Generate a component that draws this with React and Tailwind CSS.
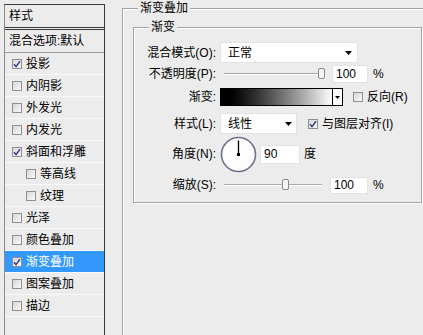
import React from 'react';

// checkbox, classic windows look
const Check = ({ checked }) => (
  <span className="flex w-[10px] h-[10px] shrink-0 items-center justify-center border border-[#8f8f8f] bg-linear-to-br from-[#d6d6d6] to-[#fbfbfb]">
    {checked && (
      <svg width="8" height="8" viewBox="0 0 8 8">
        <path d="M1 4.2 L3 6.6 L7 1.2" fill="none" stroke="#383d8c" strokeWidth="1.5" />
      </svg>
    )}
  </span>
);

const Slider = ({ thumb }) => (
  <div className="relative w-[98px] h-[12px]">
    <div className="absolute left-0 right-0 top-[5px] h-[2px] border-t border-t-[#a9a9a9] border-b border-b-white" />
    <div className={`absolute top-0 w-[7px] h-[11px] rounded-[2px] border border-[#8a8a8a] bg-[#f4f4f4] ${thumb}`} />
  </div>
);

const Arrow = () => (
  <svg width="7" height="4" viewBox="0 0 7 4">
    <path d="M0 0 H7 L3.5 4 Z" fill="#000" />
  </svg>
);

const styles = [
  { name: '投影', checked: true },
  { name: '内阴影' },
  { name: '外发光' },
  { name: '内发光' },
  { name: '斜面和浮雕', checked: true },
  { name: '等高线', sub: true },
  { name: '纹理', sub: true },
  { name: '光泽' },
  { name: '颜色叠加' },
  { name: '渐变叠加', checked: true, active: true },
  { name: '图案叠加' },
  { name: '描边' },
];

const Label = ({ children }) => (
  <div className="w-[82px] shrink-0 text-right">{children}</div>
);

export default function App() {
  return (
    <div className="flex w-[423px] h-[335px] overflow-hidden bg-[#ececec] text-[12px] leading-[16px] text-black font-['Liberation_Sans','Noto_Sans_CJK_SC',sans-serif]">
      {/* left list */}
      <div className="ml-[4px] mt-[4px] w-[101px] shrink-0 h-[340px] border-t border-x border-[#3a3a3a] border-l-[#8a8a8a]">
        <div className="h-[22px] flex items-center pl-[4px]">样式</div>
        <div className="border-t-[3px] border-double border-[#3a3a3a]" />
        <div className="h-[23px] flex items-center pl-[4px] border-b border-[#9a9a9a]">混合选项:默认</div>
        {styles.map((s) => (
          <div
            key={s.name}
            className={`h-[22px] border-b border-[#f9f9f9] flex items-center gap-[4px] ${s.sub ? 'pl-[21px]' : 'pl-[7px]'} ${s.active ? 'bg-[#3399ff] text-white' : ''}`}
          >
            <Check checked={s.checked} />
            <span>{s.name}</span>
          </div>
        ))}
      </div>

      {/* right panel */}
      <div className="ml-[17px] mt-[8px] w-[320px] h-[340px] shrink-0 relative border border-[#a3a3a3] shadow-[inset_1px_1px_0_#fff]">
        <div className="absolute -top-[9px] left-[15px] px-[2px] bg-[#ececec]">渐变叠加</div>

        <div className="relative ml-[10px] mt-[18px] w-[289px] h-[176px] border border-[#a3a3a3] shadow-[inset_1px_1px_0_#fff,1px_1px_0_#fff]">
          <div className="absolute -top-[9px] left-[15px] px-[2px] bg-[#ececec]">渐变</div>

          <div className="flex flex-col">
            <div className="mt-[14px] h-[21px] flex items-center">
              <Label>混合模式(O):</Label>
              <div className="ml-[4px] w-[138px] h-[21px] flex items-center justify-between pl-[7px] pr-[5px] bg-white border border-[#e2e2e2]">
                <span>正常</span>
                <Arrow />
              </div>
            </div>

            <div className="mt-[2px] h-[18px] flex items-center">
              <Label>不透明度(P):</Label>
              <div className="ml-[8px]">
                <Slider thumb="left-[94px]" />
              </div>
              <div className="ml-[10px] w-[36px] h-[18px] pl-[3px] flex items-center bg-white border border-[#e2e2e2]">100</div>
              <span className="ml-[5px]">%</span>
            </div>

            <div className="mt-[5px] h-[18px] flex items-center">
              <Label>渐变:</Label>
              <div className="ml-[4px] w-[123px] h-[18px] flex border border-black">
                <div className="flex-1 bg-linear-to-r from-black to-white" />
                <div className="w-[10px] border-l border-black bg-white flex items-center justify-center">
                  <svg width="5" height="3" viewBox="0 0 5 3">
                    <path d="M0 0 H5 L2.5 3 Z" fill="#000" />
                  </svg>
                </div>
              </div>
              <div className="ml-[10px] flex items-center gap-[4px]">
                <Check />
                <span>反向(R)</span>
              </div>
            </div>

            <div className="mt-[7px] h-[21px] flex items-center">
              <Label>样式(L):</Label>
              <div className="ml-[4px] w-[77px] h-[21px] flex items-center justify-between pl-[7px] pr-[4px] bg-white border border-[#e2e2e2]">
                <span>线性</span>
                <Arrow />
              </div>
              <div className="ml-[11px] flex items-center gap-[4px]">
                <Check checked />
                <span>与图层对齐(I)</span>
              </div>
            </div>

            <div className="mt-[2px] h-[36px] flex items-center">
              <Label>角度(N):</Label>
              <svg className="ml-[4px]" width="37" height="37" viewBox="0 0 37 37">
                <circle cx="18.5" cy="18.5" r="17" fill="#fdfdfd" stroke="#6c7189" strokeWidth="1.6" />
                <line x1="18.5" y1="18.5" x2="18.5" y2="4.5" stroke="#000" strokeWidth="1.3" />
                <rect x="17" y="17" width="3" height="3" fill="#000" />
              </svg>
              <div className="ml-[3px] w-[40px] h-[19px] pl-[3px] flex items-center bg-white border border-[#e2e2e2]">90</div>
              <span className="ml-[4px]">度</span>
            </div>

            <div className="mt-[4px] h-[18px] flex items-center">
              <Label>缩放(S):</Label>
              <div className="ml-[8px]">
                <Slider thumb="left-[58px]" />
              </div>
              <div className="ml-[8px] w-[38px] h-[17px] pl-[3px] flex items-center bg-white border border-[#e2e2e2]">100</div>
              <span className="ml-[5px]">%</span>
            </div>
          </div>
        </div>
      </div>
    </div>
  );
}
